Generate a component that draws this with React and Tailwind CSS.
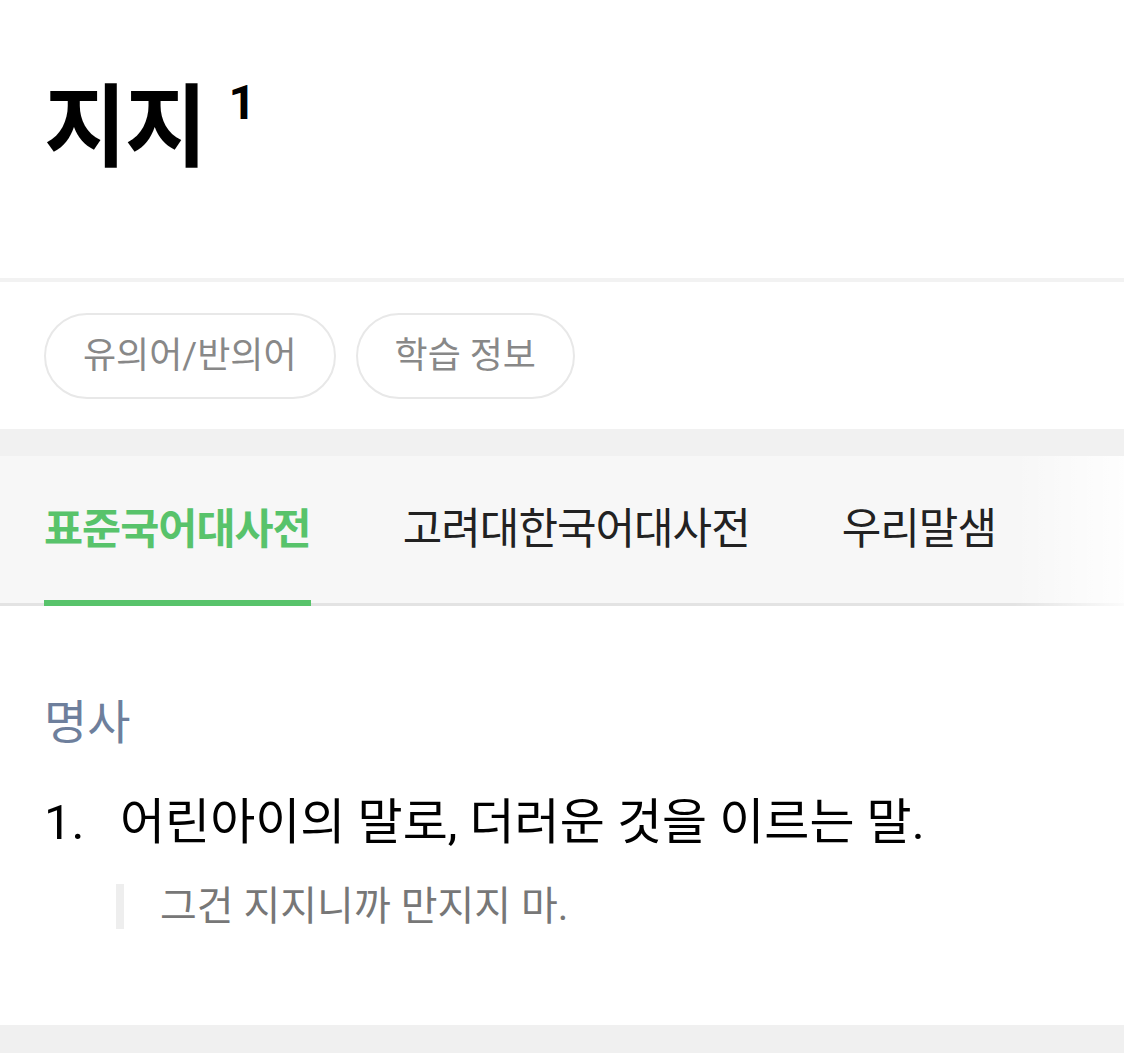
export default function App() {
  return (
    <div className="w-[1124px] h-[1053px] bg-white overflow-hidden flex flex-col font-['Roboto','Noto_Sans_CJK_KR',sans-serif]">
      {/* Title */}
      <div className="h-[278px] pl-[44px] pt-[67px] flex items-start">
        <h1 className="text-[90px] leading-[124px] font-bold text-black tracking-[-2px]">지지</h1>
        <span className="text-[48px] font-bold text-black ml-[23px] mt-[12px] leading-none">1</span>
      </div>
      <div className="h-[4px] bg-[#f2f2f2]" />
      {/* Chips */}
      <div className="h-[147px] pl-[44px] flex items-center gap-[20px]">
        <div className="h-[86px] px-[37px] rounded-full border-2 border-[#e8e8e8] flex items-center text-[36px] text-[#888888]">유의어/반의어</div>
        <div className="h-[86px] px-[37px] rounded-full border-2 border-[#e8e8e8] flex items-center text-[36px] text-[#888888]">학습 정보</div>
      </div>
      <div className="h-[27px] bg-[#f1f1f1]" />
      {/* Tabs */}
      <div className="relative h-[150px] bg-[#f7f7f7] border-b-[3px] border-[#e3e3e3]">
        <div className="flex h-full pl-[44px] gap-[92px]">
          <div className="relative h-full flex items-center text-[42.5px] font-bold text-[#58c36b] tracking-[-1px]">
            표준국어대사전
            <div className="absolute left-0 right-0 bottom-[-3px] h-[6px] bg-[#58c36b]" />
          </div>
          <div className="h-full flex items-center text-[43px] text-[#222222] tracking-[-1px]">고려대한국어대사전</div>
          <div className="h-full flex items-center text-[43px] text-[#222222] tracking-[-1px]">우리말샘</div>
        </div>
        <div className="absolute right-0 top-0 bottom-[-3px] w-[110px] bg-gradient-to-r from-[rgba(255,255,255,0)] to-[rgba(255,255,255,0.85)]" />
      </div>
      {/* Content */}
      <div className="flex-1 pl-[44px] pt-[87px]">
        <div className="text-[47px] leading-[60px] text-[#6e7f9c]">명사</div>
        <div className="mt-[40px] flex text-[49px] leading-[60px] text-black">
          <span className="w-[76px]">1.</span>
          <span>어린아이의 말로, 더러운 것을 이르는 말.</span>
        </div>
        <div className="mt-[31px] ml-[72px] border-l-[8px] border-[#eeeeee] pl-[36px] text-[40px] leading-[45px] text-[#777777]">
          그건 지지니까 만지지 마.
        </div>
      </div>
      <div className="h-[28px] bg-[#f0f0f0]" />
    </div>
  );
}
